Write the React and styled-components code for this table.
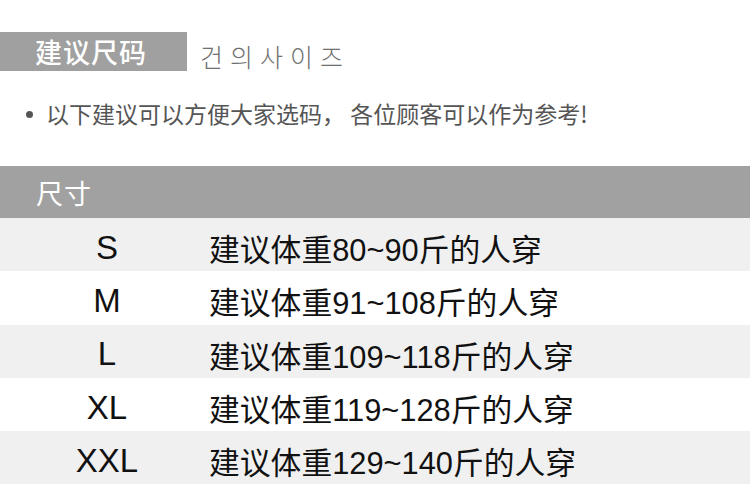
import styled, { createGlobalStyle } from "styled-components";

const GlobalStyle = createGlobalStyle`
  body {
    margin: 0;
    background: #ffffff;
    font-family: "Liberation Sans", "Noto Sans CJK SC", sans-serif;
  }
`;

const Page = styled.div`
  width: 750px;
  padding-top: 32px;
`;

const TitleRow = styled.div`
  display: flex;
  align-items: center;
  height: 39px;
`;

const TitleTag = styled.div`
  width: 187px;
  height: 39px;
  box-sizing: border-box;
  padding-left: 35px;
  display: flex;
  align-items: center;
  background: #a0a0a0;
  color: #ffffff;
  font-family: "Noto Sans CJK SC", sans-serif;
  font-size: 27px;
  font-weight: 500;
  letter-spacing: 1px;
`;

const SubTitle = styled.div`
  margin-left: 13px;
  padding-top: 9px;
  font-family: "Noto Sans CJK KR", sans-serif;
  font-size: 25px;
  font-weight: 300;
  letter-spacing: 7px;
  color: #707070;
`;

const Note = styled.div`
  display: flex;
  align-items: center;
  margin-top: 29px;
  padding-left: 26px;
  height: 26px;
  color: #555555;
  font-family: "Noto Sans CJK SC", sans-serif;
  font-size: 23px;
`;

const Dot = styled.span`
  width: 7px;
  height: 7px;
  border-radius: 50%;
  background: #555555;
  margin-right: 13px;
  margin-top: 2px;
`;

const Table = styled.div`
  margin-top: 40px;
`;

const Header = styled.div`
  height: 52px;
  display: flex;
  align-items: center;
  padding-left: 36px;
  background: #a1a1a1;
  color: #ffffff;
  font-family: "Noto Sans CJK SC", sans-serif;
  font-size: 27px;
  letter-spacing: 1px;
`;

const Row = styled.div`
  height: 53.3px;
  display: flex;
  align-items: center;
  padding-top: 6px;
  box-sizing: border-box;
  background: ${(props) => (props.shaded ? "#f0f0f0" : "#ffffff")};
  color: #111111;
`;

const SizeCell = styled.div`
  width: 150px;
  margin-left: 32px;
  text-align: center;
  font-family: "Liberation Sans", sans-serif;
  font-size: 33px;
`;

const DescCell = styled.div`
  margin-left: 27px;
  font-family: "Liberation Sans", "Noto Sans CJK SC", sans-serif;
  font-size: 30.8px;
`;

const sizes = [
  { size: "S", desc: "建议体重80~90斤的人穿" },
  { size: "M", desc: "建议体重91~108斤的人穿" },
  { size: "L", desc: "建议体重109~118斤的人穿" },
  { size: "XL", desc: "建议体重119~128斤的人穿" },
  { size: "XXL", desc: "建议体重129~140斤的人穿" },
];

export default function App() {
  return (
    <Page>
      <GlobalStyle />
      <TitleRow>
        <TitleTag>建议尺码</TitleTag>
        <SubTitle>건의사이즈</SubTitle>
      </TitleRow>
      <Note>
        <Dot />
        以下建议可以方便大家选码，&nbsp;各位顾客可以作为参考!
      </Note>
      <Table>
        <Header>尺寸</Header>
        {sizes.map((item, i) => (
          <Row key={item.size} shaded={i % 2 === 0}>
            <SizeCell>{item.size}</SizeCell>
            <DescCell>{item.desc}</DescCell>
          </Row>
        ))}
      </Table>
    </Page>
  );
}
